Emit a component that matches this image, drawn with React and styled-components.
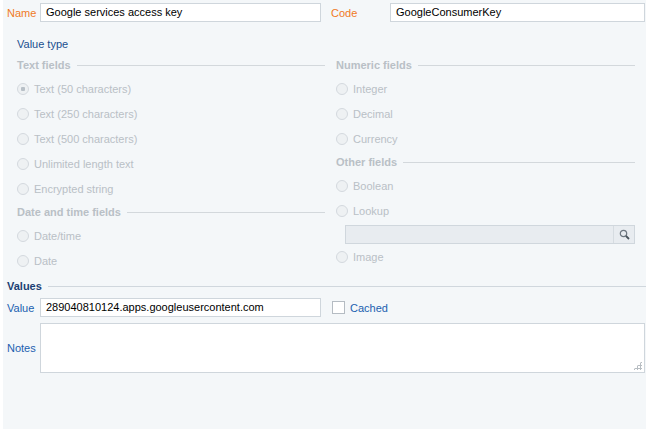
import React from "react";
import styled, { createGlobalStyle } from "styled-components";

const G = createGlobalStyle`
  body{margin:0;background:#fff;font-family:"Liberation Sans",Arial,sans-serif;font-size:11px;}
`;
const Page = styled.div`
  margin-left:3px;width:643px;height:429px;background:#f4f7f9;position:relative;
  box-sizing:border-box;padding:3px 0 0 0;
`;
const Row = styled.div`
  display:flex;align-items:center;height:${p=>p.h||19}px;margin-top:${p=>p.mt||0}px;
`;
const Label = styled.span`
  color:${p=>p.orange?"#f07a1f":"#1b5fb0"};width:${p=>p.w}px;padding-left:${p=>p.pl??4}px;box-sizing:border-box;
`;
const Input = styled.div`
  width:${p=>p.w}px;height:${p=>p.h||19}px;box-sizing:border-box;background:#fff;border:1px solid #cfd6dc;
  padding:2px 5px;color:#000;white-space:nowrap;position:relative;
`;
const Small = styled.div`color:#1b4f8f;padding-left:14px;margin-top:16px;height:14px;`;
const Cols = styled.div`display:grid;grid-template-columns:308px 299px;gap:11px;padding-left:14px;margin-top:2px;`;
const Col = styled.div`display:flex;flex-direction:column;`;
const Header = styled.div`
  display:flex;align-items:center;gap:6px;color:${p=>p.dark?"#1b3f73":"#b9c0c6"};font-weight:bold;height:22px;
  &::after{content:"";flex:1;border-top:1px solid ${p=>p.dark?"#d0d7dd":"#d3d8dc"};}
`;
const Radio = styled.div`
  display:flex;align-items:center;gap:5px;height:25px;color:#b9c0c6;
  &::before{content:"";width:10px;height:10px;border-radius:50%;border:1px solid #d4d9de;
    background:${p=>p.on?"radial-gradient(circle,#b8c0c7 0 2px,#eef1f3 2.5px)":"#eef1f3"};}
`;
const Lookup = styled.div`
  margin-left:9px;width:290px;height:19px;box-sizing:border-box;border:1px solid #d0d7dd;background:#e8ecf0;
  display:flex;justify-content:flex-end;margin-top:2px;
`;
const Btn = styled.div`width:20px;border-left:1px solid #d6dce1;display:flex;align-items:center;justify-content:center;`;
const Box = styled.span`width:11px;height:11px;border:1px solid #b5bcc3;background:#fff;margin:0 5px 0 11px;`;
const Grip = styled.div`position:absolute;right:2px;bottom:2px;width:9px;height:9px;
  background:radial-gradient(circle,#b7bdc2 1px,transparent 1.3px) 0 0/3px 3px;
  clip-path:polygon(100% 0,100% 100%,0 100%);`;

export default function App(){
  return <><G/><Page>
    <Row>
      <Label orange w={37}>Name</Label><Input w={281}>Google services access key</Input>
      <Label orange w={69} pl={10}>Code</Label><Input w={255}>GoogleConsumerKey</Input>
    </Row>
    <Small>Value type</Small>
    <Cols>
      <Col>
        <Header>Text fields</Header>
        <Radio on>Text (50 characters)</Radio>
        <Radio>Text (250 characters)</Radio>
        <Radio>Text (500 characters)</Radio>
        <Radio>Unlimited length text</Radio>
        <Radio>Encrypted string</Radio>
        <Header>Date and time fields</Header>
        <Radio>Date/time</Radio>
        <Radio>Date</Radio>
      </Col>
      <Col>
        <Header>Numeric fields</Header>
        <Radio>Integer</Radio>
        <Radio>Decimal</Radio>
        <Radio>Currency</Radio>
        <Header>Other fields</Header>
        <Radio>Boolean</Radio>
        <Radio>Lookup</Radio>
        <Lookup><Btn><svg width="11" height="11" viewBox="0 0 11 11"><circle cx="4.5" cy="4.5" r="3.2" fill="none" stroke="#6d7780" strokeWidth="1.2"/><path d="M7 7l3 3" stroke="#4a545c" strokeWidth="1.8"/></svg></Btn></Lookup>
        <Radio>Image</Radio>
      </Col>
    </Cols>
    <div style={{paddingLeft:4,marginTop:2}}><Header dark>Values</Header></div>
    <Row mt={1}>
      <Label w={37}>Value</Label><Input w={281}>289040810124.apps.googleusercontent.com</Input>
      <Box/><Label w={60} pl={0}>Cached</Label>
    </Row>
    <Row mt={6} h={50}>
      <Label w={37}>Notes</Label><Input w={605} h={50}><Grip/></Input>
    </Row>
  </Page></>;
}
